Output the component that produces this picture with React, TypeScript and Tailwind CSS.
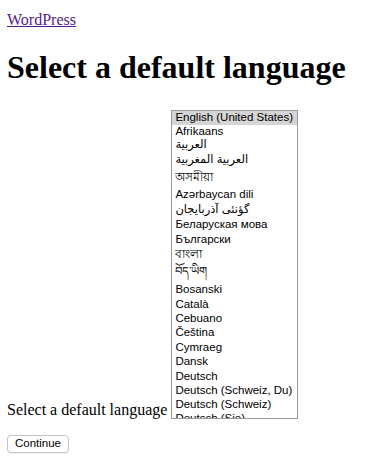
const LANGS = [
  { name: 'English (United States)', h: 'h-[14px]', selected: true },
  { name: 'Afrikaans', h: 'h-[13px]' },
  { name: 'العربية', h: 'h-[14px]' },
  { name: 'العربية المغربية', h: 'h-[16px]' },
  { name: 'অসমীয়া', h: 'h-[19px]' },
  { name: 'Azərbaycan dili', h: 'h-[15px]' },
  { name: 'گؤنئی آذربایجان', h: 'h-[15px]' },
  { name: 'Беларуская мова', h: 'h-[15px]' },
  { name: 'Български', h: 'h-[15px]' },
  { name: 'বাংলা', h: 'h-[15px]' },
  { name: 'བོད་ཡིག', h: 'h-[20px]' },
  { name: 'Bosanski', h: 'h-[16px]' },
  { name: 'Català', h: 'h-[14px]' },
  { name: 'Cebuano', h: 'h-[14px]' },
  { name: 'Čeština', h: 'h-[14px]' },
  { name: 'Cymraeg', h: 'h-[15px]' },
  { name: 'Dansk', h: 'h-[14px]' },
  { name: 'Deutsch', h: 'h-[15px]' },
  { name: 'Deutsch (Schweiz, Du)', h: 'h-[14px]' },
  { name: 'Deutsch (Schweiz)', h: 'h-[14px]' },
  { name: 'Deutsch (Sie)', h: 'h-[14px]' },
]

const serif = "font-['Liberation_Serif','Times_New_Roman',serif]"
const sans = "font-['Liberation_Sans','Noto_Sans','DejaVu_Sans',sans-serif]"

export default function App() {
  return (
    <div className={`${serif} bg-white text-black w-[370px] h-[472px] px-[7px] pt-[11px]`}>
      <p className="text-[16px] leading-[18px]">
        <a href="#" className="text-[#551a8b] underline">WordPress</a>
      </p>

      <h1 className="mt-[20px] text-[32px] leading-[36px] font-bold">Select a default language</h1>

      <div className="mt-[25px] flex items-end gap-[4px]">
        <label className="text-[16px] leading-[18px] whitespace-nowrap">Select a default language</label>
        <div className={`${sans} w-[127px] h-[309px] border border-[#9a9a9a] overflow-hidden text-[11.5px] text-black`}>
          {LANGS.map((l) => (
            <div
              key={l.name}
              className={`${l.h} flex items-center pl-[3px] whitespace-nowrap ${l.selected ? 'bg-[#d5d5d5]' : ''}`}
            >
              {l.name}
            </div>
          ))}
        </div>
      </div>

      <button className={`${sans} mt-[16px] w-[62px] h-[18px] rounded-[4px] border border-[#c4c4c4] bg-white text-[11.5px] leading-none text-black flex items-center justify-center shadow-[0_1px_0_rgba(0,0,0,0.05)]`}>
        Continue
      </button>
    </div>
  )
}
